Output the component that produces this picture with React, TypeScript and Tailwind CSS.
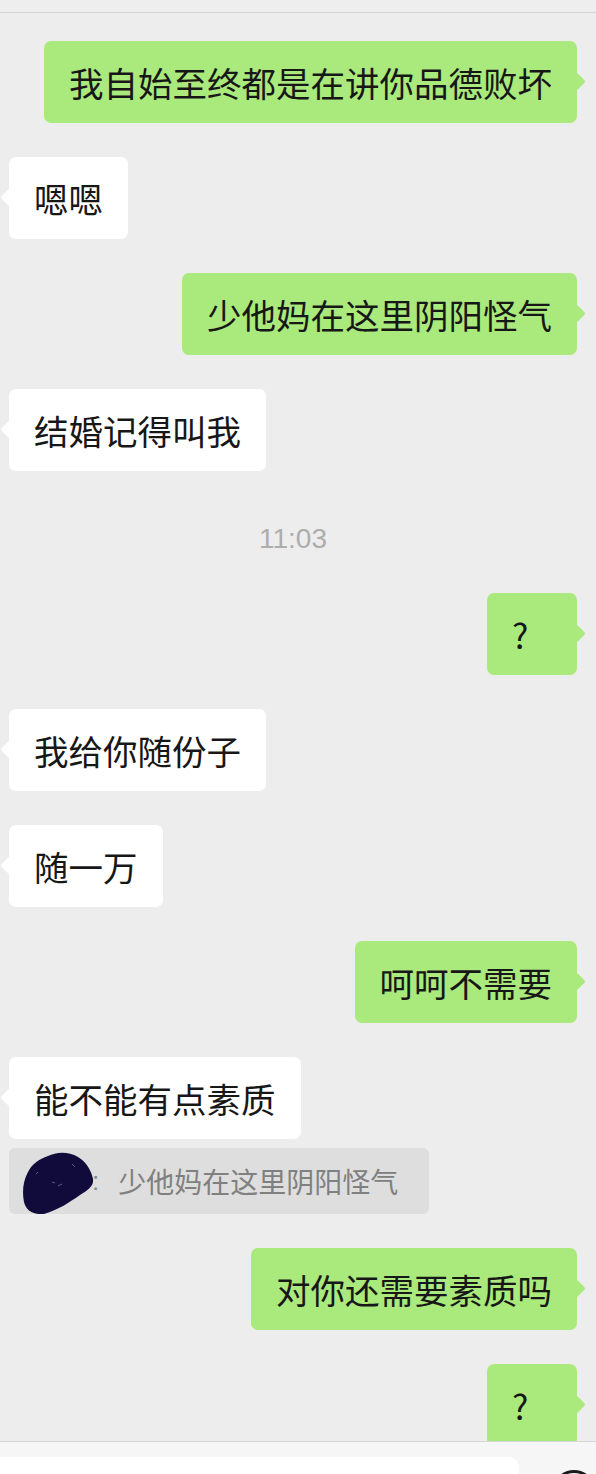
import React from 'react';

type Msg =
  | { kind: 'me'; text: string; minW?: boolean }
  | { kind: 'them'; text: string; quote?: string }
  | { kind: 'time'; text: string };

const messages: Msg[] = [
  { kind: 'me', text: '我自始至终都是在讲你品德败坏' },
  { kind: 'them', text: '嗯嗯' },
  { kind: 'me', text: '少他妈在这里阴阳怪气' },
  { kind: 'them', text: '结婚记得叫我' },
  { kind: 'time', text: '11:03' },
  { kind: 'me', text: '?', minW: true },
  { kind: 'them', text: '我给你随份子' },
  { kind: 'them', text: '随一万' },
  { kind: 'me', text: '呵呵不需要' },
  { kind: 'them', text: '能不能有点素质', quote: '少他妈在这里阴阳怪气' },
  { kind: 'me', text: '对你还需要素质吗' },
  { kind: 'me', text: '?', minW: true },
];

const cjk = "font-['Noto_Sans_CJK_SC','Noto_Sans',sans-serif]";

// scribbled-out name over the quote
const Scribble = () => (
  <svg width="72" height="62" viewBox="0 0 72 62" className="shrink-0 self-end">
    <path
      d="M26 4 C34 0 46 -1 56 5 C63 9 69 17 71 27 C72 34 66 38 58 43 C48 50 36 58 22 62 C12 63 4 59 2 50 C0 40 1 29 6 20 C10 12 17 7 26 4 Z"
      fill="#110b3b"
    />
    <path d="M30 30 l3 1 M36 34 l4 -2 M50 12 l3 3 M14 22 l2 -2" stroke="#5f5a86" strokeWidth="1" />
  </svg>
);

const Bubble = ({ mine, text, minW }: { mine: boolean; text: string; minW?: boolean }) => (
  <div
    className={`relative rounded-[7px] px-[25px] py-[20px] text-[34.5px] leading-[42px] text-[#171717] ${cjk} ${
      mine ? 'bg-[#aae97c]' : 'bg-white'
    } ${minW ? 'min-w-[90px]' : ''}`}
  >
    {text}
    <span
      className={`absolute top-[34px] h-[13px] w-[13px] rotate-45 rounded-[2px] ${
        mine ? 'right-[-6px] bg-[#aae97c]' : 'left-[-6px] bg-white'
      }`}
    />
  </div>
);

export default function App() {
  return (
    <div className="flex h-[1474px] w-[596px] flex-col overflow-hidden bg-[#ededed]">
      <div className="h-[13px] shrink-0 border-b border-[#d3d3d3] bg-[#eeeeee]" />

      <div className="flex flex-1 flex-col gap-[34px] overflow-hidden pt-[28px]">
        {messages.map((m, i) => {
          if (m.kind === 'time') {
            return (
              <div
                key={i}
                className="h-[54px] shrink-0 pr-[10px] pt-[20px] text-center text-[28px] leading-[28px] text-[#adadad] font-['Liberation_Sans',Arial,sans-serif]"
              >
                {m.text}
              </div>
            );
          }
          if (m.kind === 'me') {
            return (
              <div key={i} className="flex shrink-0 justify-end pr-[19px]">
                <Bubble mine text={m.text} minW={m.minW} />
              </div>
            );
          }
          return (
            <div key={i} className="flex shrink-0 flex-col items-start gap-[9px] pl-[9px]">
              <Bubble mine={false} text={m.text} />
              {m.quote && (
                <div className="flex h-[66px] items-center rounded-[6px] bg-[#dedede] pl-[13px] pr-[31px]">
                  <Scribble />
                  <span className="ml-[-2px] text-[26px] text-[#8a8a8a] font-['Liberation_Sans',sans-serif]">:</span>
                  <span className={`ml-[19px] text-[28px] leading-[34px] text-[#808080] ${cjk}`}>{m.quote}</span>
                </div>
              )}
            </div>
          );
        })}
      </div>

      <div className="flex h-[33px] shrink-0 items-start border-t border-[#d6d6d6] bg-[#f6f6f6] pt-[15px]">
        <div className="h-[40px] w-[530px] rounded-tr-[10px] bg-white" />
        <div className="ml-[33px] mt-[13px] h-[44px] w-[44px] shrink-0 rounded-full border-[3px] border-[#1a1a1a]" />
      </div>
    </div>
  );
}
